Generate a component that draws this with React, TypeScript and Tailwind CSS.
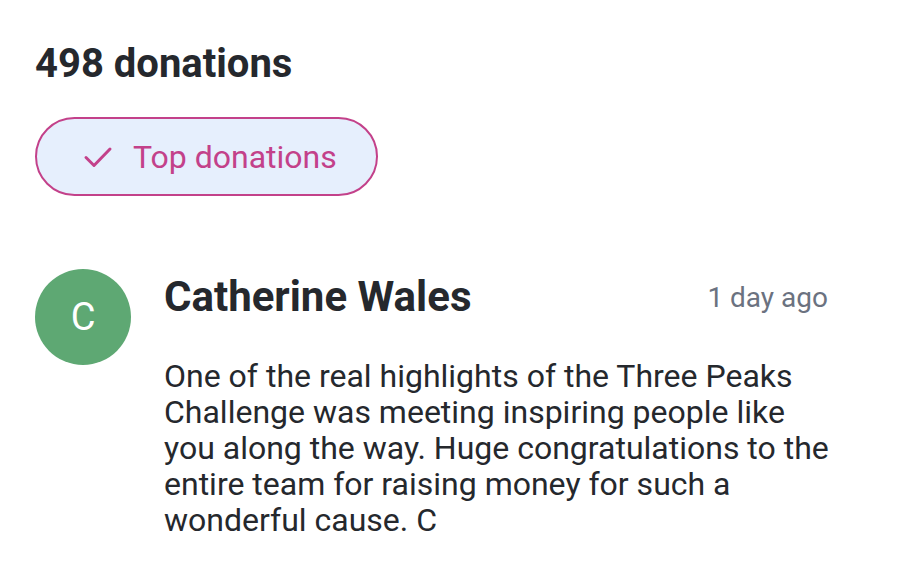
export default function App() {
  return (
    <div className="w-[908px] h-[576px] bg-white overflow-hidden font-['Roboto',sans-serif] text-[#25282d]">
      <div className="pl-[35px] pr-[76px] pt-[40px]">
        <h2 className="text-[40px] leading-[48px] font-bold">498 donations</h2>
        <button className="mt-[29px] flex items-center h-[79px] w-[343px] rounded-full border-2 border-[#c3418a] bg-[#e6effd] pl-[46px] text-[#c3418a]">
          <svg width="30" height="24" viewBox="0 0 30 24" fill="none" stroke="currentColor" strokeWidth="3" strokeLinecap="round" strokeLinejoin="round">
            <path d="M3 12.5l8 8L27 4" />
          </svg>
          <span className="ml-[20px] text-[32px] leading-none">Top donations</span>
        </button>
        <div className="mt-[73px] flex gap-[33px]">
          <div className="w-[96px] h-[96px] shrink-0 rounded-full bg-[#5ea873] flex items-center justify-center text-white text-[38px]">
            C
          </div>
          <div className="flex-1 pt-[4px]">
            <div className="flex items-start justify-between">
              <div className="text-[42px] leading-[48px] font-bold">Catherine Wales</div>
              <div className="pt-[9px] pr-[4px] text-[28px] leading-[32px] text-[#6b7280]">1 day ago</div>
            </div>
            <p className="mt-[37px] text-[32px] leading-[36px]">
              One of the real highlights of the Three Peaks Challenge was meeting inspiring people like you along the way. Huge congratulations to the entire team for raising money for such a wonderful cause. C
            </p>
          </div>
        </div>
      </div>
    </div>
  );
}
